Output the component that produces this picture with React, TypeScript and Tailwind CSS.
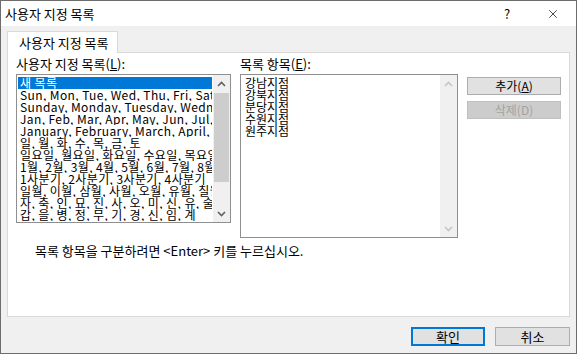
import { X } from "lucide-react";

const customLists = [
  "새 목록",
  "Sun, Mon, Tue, Wed, Thu, Fri, Sat",
  "Sunday, Monday, Tuesday, Wednesday, Thursday, Friday, Saturday",
  "Jan, Feb, Mar, Apr, May, Jun, Jul, Aug, Sep, Oct, Nov, Dec",
  "January, February, March, April, May, June, July",
  "일, 월, 화, 수, 목, 금, 토",
  "일요일, 월요일, 화요일, 수요일, 목요일, 금요일, 토요일",
  "1월, 2월, 3월, 4월, 5월, 6월, 7월, 8월, 9월",
  "1사분기, 2사분기, 3사분기, 4사분기",
  "일월, 이월, 삼월, 사월, 오월, 유월, 칠월",
  "자, 축, 인, 묘, 진, 사, 오, 미, 신, 유, 술, 해",
  "갑, 을, 병, 정, 무, 기, 경, 신, 임, 계",
];

const entries = ["강남지점", "강북지점", "분당지점", "수원지점", "원주지점"];

const Chevron = ({ up, color }: { up?: boolean; color: string }) => (
  <svg width="9" height="6" viewBox="0 0 9 6">
    <path
      d={up ? "M1 5 L4.5 1.5 L8 5" : "M1 1 L4.5 4.5 L8 1"}
      stroke={color}
      strokeWidth="1.6"
      fill="none"
    />
  </svg>
);

const ScrollBar = ({ disabled }: { disabled?: boolean }) => {
  const color = disabled ? "#c6c6c6" : "#606060";
  return (
    <div className="w-[17px] bg-[#f0f0f0] flex flex-col shrink-0">
      <div className="h-[17px] flex items-center justify-center">
        <Chevron up color={color} />
      </div>
      <div className="flex-1">
        {!disabled && <div className="mt-[1px] mx-[1px] h-[89px] bg-[#cdcdcd]" />}
      </div>
      <div className="h-[17px] flex items-center justify-center">
        <Chevron color={color} />
      </div>
    </div>
  );
};

const App = () => {
  return (
    <div className="w-[577px] h-[354px] border border-[#6d6d6d] bg-[#f0f0f0] flex flex-col font-['Noto_Sans_CJK_KR',sans-serif] text-[12px] text-black">
      {/* title bar */}
      <div className="h-[25px] bg-white flex items-center justify-between shrink-0">
        <span className="pl-[4px] text-[13px] leading-none">사용자 지정 목록</span>
        <div className="flex items-center">
          <span className="w-[46px] text-center text-[13px] leading-none">?</span>
          <span className="w-[46px] flex justify-center">
            <X size={14} strokeWidth={1.2} />
          </span>
        </div>
      </div>

      <div className="flex-1 flex flex-col px-[6px] pt-[5px]">
        {/* tab strip */}
        <div className="flex">
          <div className="w-[111px] h-[22px] bg-white border border-b-0 border-[#d9d9d9] -mb-px relative flex items-center pl-[11px] text-[13px] leading-none">
            사용자 지정 목록
          </div>
        </div>

        {/* tab panel */}
        <div className="h-[265px] bg-white border border-[#d9d9d9] pl-[8px] pt-[4px] flex flex-col">
          <div className="flex">
            <div className="flex flex-col w-[215px]">
              <div className="h-[14px] leading-[14px] mb-[3px] text-[13px]">
                사용자 지정 목록(<span className="underline">L</span>):
              </div>
              <div className="h-[149px] border border-[#8f8f8f] flex">
                <div className="flex-1 pt-[2px] pl-[1px] pr-[1px] overflow-hidden tracking-[0.4px]">
                  {customLists.map((item, i) => (
                    <div
                      key={item}
                      className={
                        i === 0
                          ? "h-[12px] leading-[12px] whitespace-nowrap overflow-hidden bg-[#0078d7] text-white pl-[2px]"
                          : "h-[12px] leading-[12px] whitespace-nowrap overflow-hidden pl-[2px]"
                      }
                    >
                      {item}
                    </div>
                  ))}
                </div>
                <ScrollBar />
              </div>
            </div>

            <div className="flex flex-col w-[218px] ml-[9px]">
              <div className="h-[14px] leading-[14px] mb-[3px] text-[13px]">
                목록 항목(<span className="underline">E</span>):
              </div>
              <div className="h-[164px] border border-[#8f8f8f] flex">
                <div className="flex-1 pt-[2px] pl-[4px] overflow-hidden">
                  {entries.map((item) => (
                    <div key={item} className="h-[12px] leading-[12px] whitespace-nowrap">
                      {item}
                    </div>
                  ))}
                </div>
                <ScrollBar disabled />
              </div>
            </div>

            <div className="flex flex-col gap-[6px] ml-[9px] mt-[20px]">
              <button className="w-[94px] h-[18px] bg-[#e1e1e1] border border-[#adadad] text-[12px] leading-none">
                추가(<span className="underline">A</span>)
              </button>
              <button className="w-[94px] h-[18px] bg-[#cccccc] border border-[#bfbfbf] text-[#a3a3a3] text-[12px] leading-none">
                삭제(D)
              </button>
            </div>
          </div>

          <div className="mt-[6px] pl-[19px] h-[14px] leading-[14px] text-[13px]">
            목록 항목을 구분하려면 &lt;Enter&gt; 키를 누르십시오.
          </div>
        </div>

        {/* footer */}
        <div className="flex justify-end gap-[10px] pt-[10px]">
          <button className="w-[74px] h-[19px] bg-[#e1e1e1] border-2 border-[#0078d7] text-[13px] leading-none">
            확인
          </button>
          <button className="w-[75px] h-[19px] bg-[#e1e1e1] border border-[#adadad] text-[13px] leading-none">
            취소
          </button>
        </div>
      </div>
    </div>
  );
};

export default App;
